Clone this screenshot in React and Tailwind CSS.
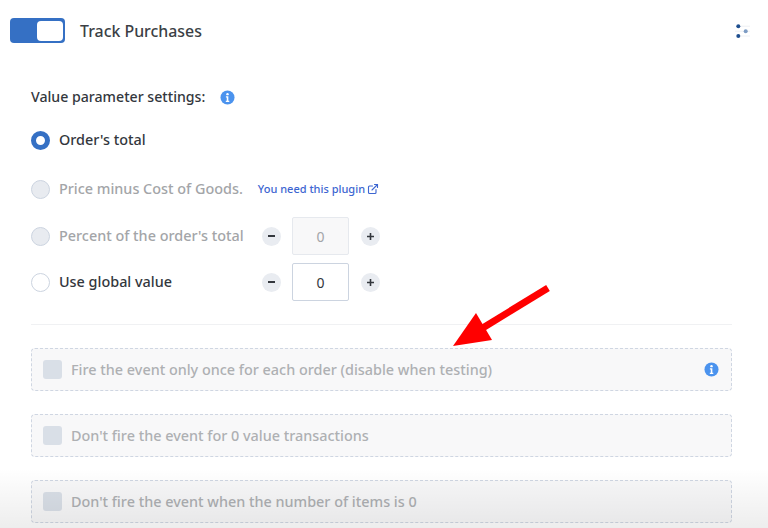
import { ExternalLink } from 'lucide-react';

function InfoDot() {
  return (
    <svg viewBox="0 0 16 16" className="w-[15px] h-[15px] shrink-0">
      <circle cx="8" cy="8" r="7.5" fill="#4b93ee" />
      <circle cx="8" cy="4.4" r="1.3" fill="#fff" />
      <path d="M6.3 6.7h2.6v4.7h1v1.3H6.2v-1.3h1V8H6.3z" fill="#fff" />
    </svg>
  );
}

function Radio({ state }) {
  if (state === 'on') {
    return <span className="w-[19px] h-[19px] rounded-full border-[5px] border-[#3570c4] bg-white shrink-0" />;
  }
  if (state === 'off') {
    return <span className="w-[19px] h-[19px] rounded-full border border-[#ccd4e0] bg-white shrink-0" />;
  }
  return <span className="w-[19px] h-[19px] rounded-full border border-[#ccd4e0] bg-[#e8ebf0] shrink-0" />;
}

function Stepper({ disabled }) {
  return (
    <div className="flex items-center">
      <span className="w-[19px] h-[19px] rounded-full bg-[#e9ecf1] flex items-center justify-center">
        <span className="w-[7px] h-[2px] bg-[#33373d]" />
      </span>
      <span
        className={`ml-[11px] w-[57px] h-[38px] flex items-center justify-center text-[14px] font-normal rounded-[2px] border ${
          disabled
            ? 'bg-[#f8f8f9] border-[#e6e9ee] text-[#a3a5a8]'
            : 'bg-white border-[#ccd4e0] text-[#33373d]'
        }`}
      >
        0
      </span>
      <span className="ml-[12px] w-[19px] h-[19px] rounded-full bg-[#e9ecf1] flex items-center justify-center">
        <svg viewBox="0 0 9 9" className="w-[9px] h-[9px]">
          <path d="M1 4.5h7M4.5 1v7" stroke="#33373d" strokeWidth="1.6" />
        </svg>
      </span>
    </div>
  );
}

function EventBox({ label, info }) {
  return (
    <div className="h-[43px] rounded-[4px] border border-dashed border-[#cfd6e2] bg-[#f8f8f9] flex items-center pl-[11px] pr-[12px]">
      <span className="w-[19px] h-[19px] rounded-[3px] bg-[#d9dfe7] shrink-0" />
      <span className="ml-[9px] text-[14.4px] font-medium text-[#aeb0b3] flex-1">{label}</span>
      {info && <InfoDot />}
    </div>
  );
}

export default function App() {
  return (
    <div
      className="relative w-[768px] h-[528px] overflow-hidden bg-white text-[#33373d]"
      style={{ fontFamily: '"Noto Sans", "Open Sans", sans-serif' }}
    >
      {/* Header */}
      <div className="flex items-center pl-[10px] pr-[18px] pt-[18px]">
        <div className="w-[55px] h-[25px] rounded-[4px] bg-[#3570c4] flex items-center justify-end pr-[2px]">
          <span className="w-[26px] h-[20px] rounded-[4px] bg-white" />
        </div>
        <h1 className="ml-[15px] text-[15.9px] font-medium text-[#3b3f45] flex-1 leading-[24px]">Track Purchases</h1>
        <svg viewBox="0 0 16 16" className="w-[16px] h-[16px]">
          <path d="M5 3.2h11M1 8.2h15M4 13h12" stroke="#eef0f3" strokeWidth="1" />
          <circle cx="4.3" cy="3.3" r="2" fill="#1f4f8f" />
          <circle cx="11.7" cy="8.2" r="2" fill="#7d9cc4" />
          <circle cx="4.3" cy="12.9" r="2" fill="#1f4f8f" />
        </svg>
      </div>

      {/* Value settings */}
      <div className="mx-[31px] mt-[43px]">
        <div className="flex items-center h-[22px] text-[14.15px] font-medium">
          Value parameter settings:
          <span className="ml-[15px]"><InfoDot /></span>
        </div>

        <div className="flex items-center h-[22px] mt-[21px] text-[14.4px] font-medium">
          <Radio state="on" />
          <span className="ml-[9px]">Order's total</span>
        </div>

        <div className="flex items-center h-[22px] mt-[27px] text-[14.4px] font-medium text-[#a3a5a8]">
          <Radio state="disabled" />
          <span className="ml-[9px]">Price minus Cost of Goods.</span>
          <span className="ml-[15px] flex items-center gap-[2px] text-[11px] text-[#3d66d1]">
            You need this plugin
            <ExternalLink className="w-[12px] h-[12px]" strokeWidth={2.25} />
          </span>
        </div>

        <div className="flex items-center h-[38px] mt-[17px] text-[14.4px] font-medium text-[#a3a5a8]">
          <Radio state="disabled" />
          <span className="ml-[9px] w-[203px]">Percent of the order's total</span>
          <Stepper disabled />
        </div>

        <div className="flex items-center h-[38px] mt-[8px] text-[14.4px] font-medium">
          <Radio state="off" />
          <span className="ml-[9px] w-[203px]">Use global value</span>
          <Stepper />
        </div>

        <div className="h-px bg-[#f0f1f3] mt-[23px] w-[701px]" />

        <div className="mt-[23px] w-[701px] flex flex-col gap-[23px]">
          <EventBox label="Fire the event only once for each order (disable when testing)" info />
          <EventBox label="Don't fire the event for 0 value transactions" />
          <EventBox label="Don't fire the event when the number of items is 0" />
        </div>
      </div>

      {/* Red arrow annotation */}
      <svg className="absolute left-0 top-0 pointer-events-none" width="768" height="528" viewBox="0 0 768 528">
        <path d="M548 288L481 329" stroke="#ff0000" strokeWidth="7" />
        <path d="M453 346L476 313L492 340Z" fill="#ff0000" />
      </svg>

      {/* Bottom fade */}
      <div className="absolute left-0 right-0 bottom-0 h-[60px] pointer-events-none bg-gradient-to-b from-transparent to-black/[.07]" />
    </div>
  );
}
